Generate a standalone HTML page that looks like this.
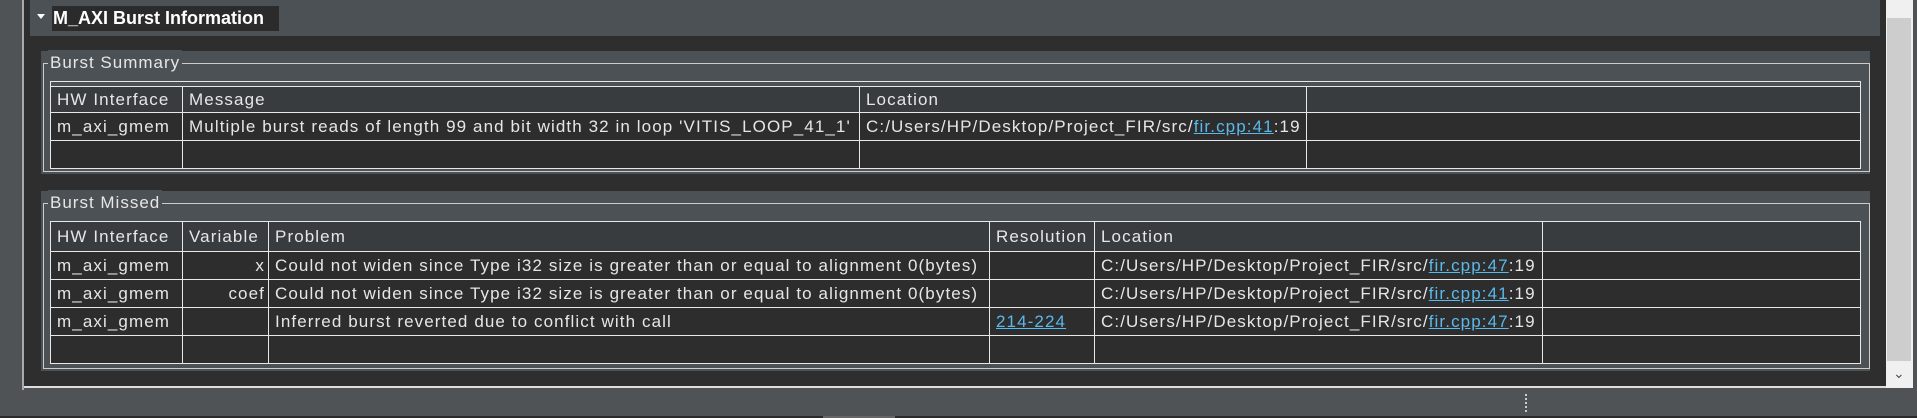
<!DOCTYPE html><html><head><style>
body{margin:0;width:1917px;height:418px;background:#4f5356;position:relative;overflow:hidden;font-family:"Liberation Sans",sans-serif;color:#e6e6e6}
div{position:absolute;box-sizing:border-box}
.t{font-size:17px;white-space:nowrap;line-height:28px;letter-spacing:1px}
a{color:#5bb8ea;text-decoration:underline}
table{position:absolute;border-collapse:collapse;font-size:17px;table-layout:fixed;letter-spacing:1.1px}
td{border:1px solid #e8e8e8;padding:0 6px;white-space:nowrap;overflow:hidden;height:27px;line-height:20px;background:#2d2d2d}
tr.h td{background:#383c3f;height:29px}
tr.hs td{background:#383c3f;height:25px}
</style></head><body>
<div style="left:22px;top:0;width:2px;height:390px;background:#aaa"></div>
<div style="left:24px;top:0;width:1864px;height:388px;background:#2e2e2e;border-right:1px solid #ddd;border-bottom:2px solid #ddd"></div>
<div style="left:30px;top:0;width:1850px;height:36px;background:#4c5155"></div>
<div style="left:37px;top:14px;width:0;height:0;border-left:4px solid transparent;border-right:4px solid transparent;border-top:5px solid #fff"></div>
<div style="left:52px;top:6px;width:227px;height:25px;background:#2b2b2b;color:#fff;font-weight:bold;font-size:18px;line-height:25px;padding-left:1px">M_AXI Burst Information</div>

<div style="left:41px;top:51px;width:1829px;height:123px;background:#4c5155"></div>
<div style="left:43px;top:63px;width:1827px;height:109px;border:1px solid #ccc"></div>
<div class="t" style="left:48px;top:50px;background:#4c5155;padding:0 2px;line-height:26px">Burst Summary</div>
<div style="left:50px;top:81px;width:1811px;height:6px;border:1px solid #e8e8e8;border-bottom:none"></div>
<table style="left:50px;top:86px;width:1811px">
<colgroup><col style="width:132px"><col style="width:677px"><col style="width:447px"><col></colgroup>
<tr class="hs"><td>HW Interface</td><td>Message</td><td>Location</td><td></td></tr>
<tr><td>m_axi_gmem</td><td>Multiple burst reads of length 99 and bit width 32 in loop 'VITIS_LOOP_41_1'</td><td>C:/Users/HP/Desktop/Project_FIR/src/<a>fir.cpp:41</a>:19</td><td></td></tr>
<tr><td></td><td></td><td></td><td></td></tr>
</table>

<div style="left:41px;top:191px;width:1829px;height:180px;background:#4c5155"></div>
<div style="left:43px;top:203px;width:1827px;height:166px;border:1px solid #ccc"></div>
<div class="t" style="left:48px;top:190px;background:#4c5155;padding:0 2px;line-height:26px">Burst Missed</div>
<table style="left:50px;top:221px;width:1811px">
<colgroup><col style="width:132px"><col style="width:86px"><col style="width:721px"><col style="width:105px"><col style="width:448px"><col></colgroup>
<tr class="h"><td>HW Interface</td><td>Variable</td><td>Problem</td><td>Resolution</td><td>Location</td><td></td></tr>
<tr><td>m_axi_gmem</td><td style="text-align:right;padding-right:3px">x</td><td>Could not widen since Type i32 size is greater than or equal to alignment 0(bytes)</td><td></td><td>C:/Users/HP/Desktop/Project_FIR/src/<a>fir.cpp:47</a>:19</td><td></td></tr>
<tr><td>m_axi_gmem</td><td style="text-align:right;padding-right:3px">coef</td><td>Could not widen since Type i32 size is greater than or equal to alignment 0(bytes)</td><td></td><td>C:/Users/HP/Desktop/Project_FIR/src/<a>fir.cpp:41</a>:19</td><td></td></tr>
<tr><td>m_axi_gmem</td><td></td><td>Inferred burst reverted due to conflict with call</td><td><a>214-224</a></td><td>C:/Users/HP/Desktop/Project_FIR/src/<a>fir.cpp:47</a>:19</td><td></td></tr>
<tr><td></td><td></td><td></td><td></td><td></td><td></td></tr>
</table>

<div style="left:1886px;top:0;width:27px;height:388px;background:#f0f0f0"></div>
<div style="left:1887px;top:18px;width:24px;height:343px;background:#cdcdcd"></div>
<div style="left:1893px;top:365px;font-size:14px;color:#555">&#8964;</div>
<div style="left:1525px;top:394px;width:0;height:18px;border-left:2px dotted #ccc"></div>
<div style="left:0;top:416px;width:1917px;height:2px;background:#2b2b2b"></div>
<div style="left:823px;top:416px;width:72px;height:2px;background:#666"></div>
</body></html>
